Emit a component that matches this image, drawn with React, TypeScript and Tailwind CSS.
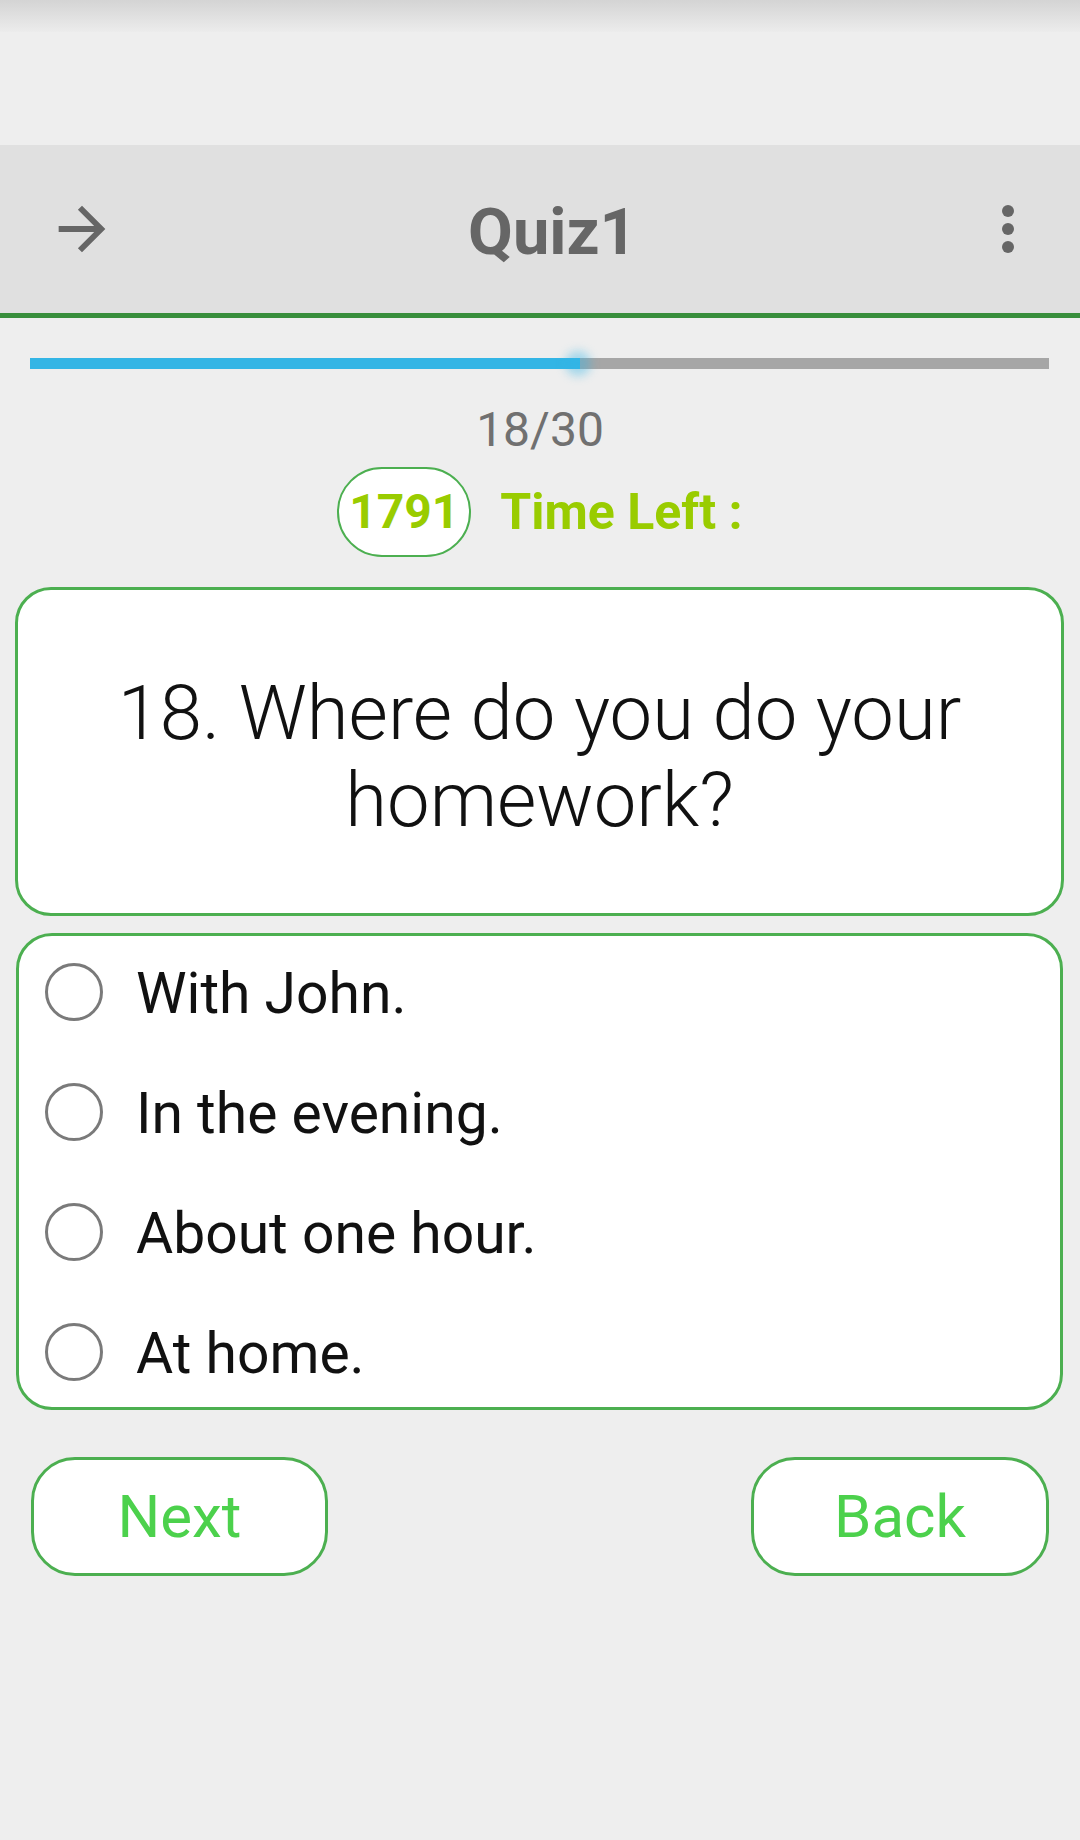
import { useState } from "react"

const options = ["With John.", "In the evening.", "About one hour.", "At home."]

function ArrowIcon() {
  return (
    <svg viewBox="0 0 24 24" className="w-[70px] h-[70px]" fill="#666666">
      <path d="M12 4l-1.41 1.41L16.17 11H4v2h12.17l-5.58 5.59L12 20l8-8z" />
    </svg>
  )
}

function MoreIcon() {
  return (
    <svg viewBox="0 0 24 24" className="w-[72px] h-[72px]" fill="#666666">
      <circle cx="12" cy="6" r="2" />
      <circle cx="12" cy="12" r="2" />
      <circle cx="12" cy="18" r="2" />
    </svg>
  )
}

export default function App() {
  const [selected, setSelected] = useState<number | null>(null)
  const current = 18
  const total = 30

  return (
    <div
      className="w-[1080px] h-[1840px] bg-[#eeeeee] flex flex-col"
      style={{ fontFamily: "Roboto, 'Noto Sans', 'Liberation Sans', sans-serif" }}
    >
      {/* status area */}
      <div className="h-[145px] flex flex-col">
        <div className="h-[32px] bg-gradient-to-b from-[#d4d4d4] to-[#ececec]" />
        <div className="flex-1 bg-[#eeeeee]" />
      </div>

      {/* toolbar */}
      <div className="h-[173px] bg-[#e0e0e0] border-b-[5px] border-[#388e3c] flex items-center pl-[47px] pr-[36px]">
        <ArrowIcon />
        <div className="flex-1 pl-[16px] pt-[6px] text-center text-[65px] leading-none font-bold text-[#666666]">Quiz1</div>
        <MoreIcon />
      </div>

      {/* progress */}
      <div className="mt-[40px] ml-[30px] mr-[31px] h-[11px] bg-[#a6a6a6] relative">
        <div className="h-full bg-[#33b5e5]" style={{ width: `${(current / total) * 90}%` }} />
        <div className="absolute top-[-7px] left-[52.5%] w-[26px] h-[25px] rounded-full bg-[#33b5e5]/40 blur-[5px]" />
      </div>

      <div className="mt-[37px] text-center text-[48px] leading-none text-[#707070]">
        {current}/{total}
      </div>

      {/* timer */}
      <div className="mt-[13px] flex items-center justify-center">
        <div className="w-[134px] h-[90px] rounded-full bg-white border-2 border-[#4caf50] flex items-center justify-center text-[48px] leading-none font-bold text-[#99cc00]">
          1791
        </div>
        <div className="ml-[29px] text-[50px] leading-none font-bold text-[#99cc00]">Time Left :</div>
      </div>

      {/* question */}
      <div className="mt-[30px] ml-[15px] mr-[16px] h-[329px] bg-white border-[3px] border-[#4caf50] rounded-[36px] px-[16px] pt-[80px] text-center text-[76px] leading-[87px] font-light text-[#111111]">
        18. Where do you do your homework?
      </div>

      {/* options */}
      <div className="mt-[17px] ml-[16px] mr-[17px] h-[477px] bg-white border-[3px] border-[#4caf50] rounded-[36px] pl-[26px] pt-[27px] flex flex-col gap-[62px]">
        {options.map((opt, i) => (
          <button key={opt} onClick={() => setSelected(i)} className="flex items-center h-[58px] text-left">
            <span className="w-[58px] h-[58px] rounded-full border-[3px] border-[#7a7a7a] flex items-center justify-center shrink-0">
              {selected === i && <span className="w-[30px] h-[30px] rounded-full bg-[#4caf50]" />}
            </span>
            <span className="ml-[33px] pt-[3px] text-[57px] leading-none text-[#111111]">{opt}</span>
          </button>
        ))}
      </div>

      {/* nav */}
      <div className="mt-[47px] px-[31px] flex justify-between">
        <button className="w-[297px] h-[119px] bg-white border-[3px] border-[#4caf50] rounded-[44px] text-[60px] leading-none text-[#4cd14c]">
          Next
        </button>
        <button className="w-[298px] h-[119px] bg-white border-[3px] border-[#4caf50] rounded-[44px] text-[60px] leading-none text-[#4cd14c]">
          Back
        </button>
      </div>
    </div>
  )
}
